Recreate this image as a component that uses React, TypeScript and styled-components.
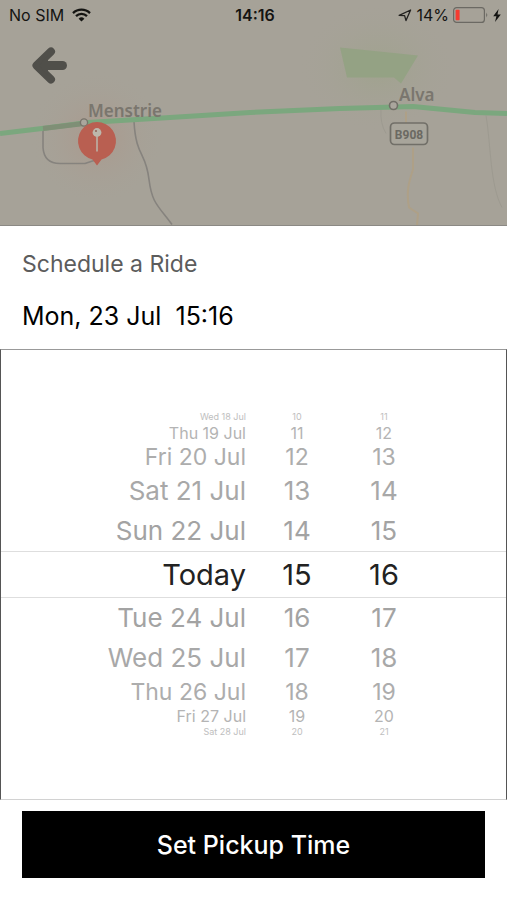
import React, { useState } from "react";
import styled, { createGlobalStyle, css } from "styled-components";

const GlobalStyle = createGlobalStyle`
  *, *::before, *::after { box-sizing: border-box; }
  body {
    margin: 0;
    background: #fff;
    color: #000;
    font-family: Inter, "Liberation Sans", sans-serif;
  }
`;

const Page = styled.div`
  display: flex;
  flex-direction: column;
  min-height: 100vh;
`;

const MapHeader = styled.header`
  position: relative;
  height: 226px;
  background: #a6a298;
  border-bottom: 1px solid #8b8984;
  overflow: hidden;
`;

const MapDrawing = styled.svg`
  position: absolute;
  inset: 0;
  width: 100%;
  height: 100%;
`;

const PlaceName = styled.text`
  font-family: "Noto Sans", sans-serif;
  font-size: 17px;
  font-weight: 600;
  fill: #7a766e;
`;

const RoadNumber = styled.text`
  font-family: Roboto, sans-serif;
  font-size: 12px;
  font-weight: 700;
  fill: #6b6962;
  text-anchor: middle;
`;

const StatusBar = styled.div`
  position: relative;
  display: grid;
  grid-template-columns: 1fr auto 1fr;
  align-items: center;
  height: 30px;
  padding: 0 6px 0 9px;
  font-size: 16px;
  line-height: 20px;
  color: #141412;
`;

const StatusGroup = styled.div<{ $end?: boolean }>`
  display: flex;
  align-items: center;
  gap: ${(p) => (p.$end ? 4 : 8)}px;
  justify-content: ${(p) => (p.$end ? "flex-end" : "flex-start")};
`;

const Clock = styled.time`
  font-weight: 600;
`;

const BackButton = styled.button`
  position: relative;
  display: block;
  margin: 12px 0 0 26px;
  padding: 0;
  width: 46px;
  height: 46px;
  border: 0;
  background: none;
  cursor: pointer;
`;

const Summary = styled.section`
  display: flex;
  flex-direction: column;
  gap: 20px;
  padding: 23px 22px 17px;
`;

const Title = styled.h1`
  margin: 0;
  font-size: 23px;
  font-weight: 400;
  line-height: 31px;
  color: #5c5c5c;
`;

const ChosenTime = styled.p`
  margin: 0;
  font-size: 25px;
  line-height: 32px;
  white-space: pre;
`;

const Picker = styled.section`
  flex: 1;
  display: flex;
  flex-direction: column;
  justify-content: center;
  border: 1px solid #555;
  border-top-color: #999;
  border-bottom-color: #d2d2d2;
`;

type Depth = 0 | 1 | 2 | 3 | 4 | 5;

const rowStyle = {
  0: { height: 47, size: 29, color: "#222" },
  1: { height: 40, size: 26, color: "#a3a3a3" },
  2: { height: 40, size: 26, color: "#a8a8a8" },
  3: { height: 28, size: 23, color: "#adadad" },
  4: { height: 20, size: 16, color: "#b4b4b4" },
  5: { height: 12, size: 9, color: "#bebebe" },
};

const WheelRow = styled.button<{ $depth: Depth }>`
  display: flex;
  justify-content: center;
  align-items: center;
  width: 100%;
  padding: 0;
  border: 0 solid #dedede;
  background: none;
  font-family: inherit;
  cursor: pointer;
  ${({ $depth }) => css`
    height: ${rowStyle[$depth].height}px;
    font-size: ${rowStyle[$depth].size}px;
    line-height: ${rowStyle[$depth].height}px;
    color: ${rowStyle[$depth].color};
    border-width: ${$depth === 0 ? "1px 0" : "0"};
  `}
`;

const DateCell = styled.span`
  width: 159px;
  text-align: right;
  white-space: nowrap;
`;

const HourCell = styled.span`
  width: 102px;
  text-align: center;
`;

const MinuteCell = styled.span`
  width: 72px;
  text-align: center;
`;

const Footer = styled.footer`
  padding: 11px 22px 22px;
`;

const SubmitButton = styled.button`
  width: 100%;
  height: 67px;
  border: 0;
  background: #000;
  color: #fff;
  font-family: inherit;
  font-size: 25px;
  font-weight: 500;
  cursor: pointer;
`;

const rows: { day: string; hour: string; minute: string; depth: Depth }[] = [
  { day: "Wed 18 Jul", hour: "10", minute: "11", depth: 5 },
  { day: "Thu 19 Jul", hour: "11", minute: "12", depth: 4 },
  { day: "Fri 20 Jul", hour: "12", minute: "13", depth: 3 },
  { day: "Sat 21 Jul", hour: "13", minute: "14", depth: 2 },
  { day: "Sun 22 Jul", hour: "14", minute: "15", depth: 1 },
  { day: "Today", hour: "15", minute: "16", depth: 0 },
  { day: "Tue 24 Jul", hour: "16", minute: "17", depth: 1 },
  { day: "Wed 25 Jul", hour: "17", minute: "18", depth: 2 },
  { day: "Thu 26 Jul", hour: "18", minute: "19", depth: 3 },
  { day: "Fri 27 Jul", hour: "19", minute: "20", depth: 4 },
  { day: "Sat 28 Jul", hour: "20", minute: "21", depth: 5 },
];

function WifiIcon() {
  return (
    <svg width="19" height="14" viewBox="0 0 19 14" fill="none" stroke="#141412" strokeWidth="2.3" aria-hidden="true">
      <path d="M1 5.1a12.2 12.2 0 0 1 17 0" />
      <path d="M4 8.2a7.9 7.9 0 0 1 11 0" />
      <path d="M9.5 13.6 6.6 10.7a4.1 4.1 0 0 1 5.8 0z" fill="#141412" stroke="none" />
    </svg>
  );
}

function LocationIcon() {
  return (
    <svg width="14" height="13" viewBox="0 0 14 13" aria-hidden="true">
      <path d="M12.6 1 1.2 6.4 6.600 6.600 8 11.600z" fill="none" stroke="#22211f" strokeWidth="1.3" strokeLinejoin="round" />
    </svg>
  );
}

function BatteryIcon() {
  return (
    <svg width="36" height="16" viewBox="0 0 36 16" aria-hidden="true">
      <rect x="0.6" y="0.6" width="30.8" height="14.8" rx="3" fill="none" stroke="#6b6963" strokeWidth="1.2" />
      <rect x="2.6" y="2.8" width="4" height="10.4" rx="0.8" fill="#f53b30" />
      <path d="M33.4 5.6q1.8 2.4 0 4.8z" fill="#5b5954" />
    </svg>
  );
}

function BoltIcon() {
  return (
    <svg width="8" height="13" viewBox="0 0 8 13" aria-hidden="true">
      <path d="M5.6 0 .2 7.2h3.2L2 13l5.8-7.6H4.5z" fill="#141412" />
    </svg>
  );
}

function MapView() {
  return (
    <MapDrawing viewBox="0 0 507 226" preserveAspectRatio="xMidYMid slice" role="img" aria-label="Map of Menstrie and Alva">
      <defs>
        <radialGradient id="pinGlow">
          <stop offset="0" stopColor="#b08f80" stopOpacity="0.5" />
          <stop offset="1" stopColor="#a6a298" stopOpacity="0" />
        </radialGradient>
        <radialGradient id="fieldGlow">
          <stop offset="0" stopColor="#9ba386" stopOpacity="0.6" />
          <stop offset="1" stopColor="#a6a298" stopOpacity="0" />
        </radialGradient>
      </defs>
      <ellipse cx="378" cy="68" rx="80" ry="65" fill="url(#fieldGlow)" />
      <path d="M340 48 418 56 401 84 394 78 347 78z" fill="#94a284" />
      <circle cx="97" cy="138" r="68" fill="url(#pinGlow)" />
      <path d="M381 110q-1 14 5 24M486 116c5 30 4 70 16 92" fill="none" stroke="#9d9a90" strokeWidth="1" />
      <path d="M406 112v14M413 148v22c-4 12-7 22-4 38l9 6-1 12" fill="none" stroke="#aea087" strokeWidth="2" />
      <path d="M43 130v18q1 16 17 16h25q8-3 14-4M134 122c2 36 12 30 15 58 3 24 9 26 23 45" fill="none" stroke="#86837e" strokeWidth="1.6" />
      <path d="M0 134 42 129 88 123 170 118 250 113 340 109 413 107 475 113 507 114" fill="none" stroke="#7ba77e" strokeWidth="5" strokeLinejoin="round" />
      <path d="M43 129 84 124" stroke="#7f8f76" strokeWidth="5" />
      <circle cx="84" cy="123" r="3.6" fill="#aaa69d" stroke="#77736b" strokeWidth="1.4" />
      <circle cx="393.5" cy="106" r="4" fill="#aaa69d" stroke="#716e67" strokeWidth="1.6" />
      <path d="M97 166 92.5 160A19 19 0 1 1 101.500 160z" fill="#b95f51" />
      <circle cx="97" cy="133" r="4.4" fill="#bdb7ac" />
      <circle cx="96" cy="131.500" r="1" fill="#8d6259" />
      <path d="M97 137v15" stroke="#bdb7ac" strokeWidth="1.5" />
      <PlaceName x="88" y="117">Menstrie</PlaceName>
      <PlaceName x="399" y="101">Alva</PlaceName>
      <rect x="390.5" y="123.500" width="37" height="21.500" rx="4" fill="#a8a59b" stroke="#716f68" strokeWidth="1.7" />
      <RoadNumber x="409" y="139">B908</RoadNumber>
    </MapDrawing>
  );
}

export default function App() {
  const [selected, setSelected] = useState("Today");

  return (
    <Page>
      <GlobalStyle />
      <MapHeader>
        <MapView />
        <StatusBar>
          <StatusGroup>
            <span>No SIM</span>
            <WifiIcon />
          </StatusGroup>
          <Clock>14:16</Clock>
          <StatusGroup $end>
            <LocationIcon />
            <span>14%</span>
            <BatteryIcon />
            <BoltIcon />
          </StatusGroup>
        </StatusBar>
        <BackButton type="button" aria-label="Back">
          <svg width="46" height="46" viewBox="0 0 46 46" fill="none" stroke="#504f4a" strokeLinecap="round" strokeLinejoin="round" aria-hidden="true">
            <path d="M25 9.500 10.500 23.500 25 37.500" strokeWidth="8" />
            <path d="M14 23.500H36.500" strokeWidth="9" />
            <path d="M22 13 13 23.500 22 34z" fill="#504f4a" stroke="none" />
          </svg>
        </BackButton>
      </MapHeader>
      <Summary>
        <Title>Schedule a Ride</Title>
        <ChosenTime>{"Mon, 23 Jul  15:16"}</ChosenTime>
      </Summary>
      <Picker aria-label="Pickup date and time">
        {rows.map((row) => (
          <WheelRow
            key={row.day}
            type="button"
            $depth={row.depth}
            aria-pressed={selected === row.day}
            onClick={() => setSelected(row.day)}
          >
            <DateCell>{row.day}</DateCell>
            <HourCell>{row.hour}</HourCell>
            <MinuteCell>{row.minute}</MinuteCell>
          </WheelRow>
        ))}
      </Picker>
      <Footer>
        <SubmitButton type="button">Set Pickup Time</SubmitButton>
      </Footer>
    </Page>
  );
}
